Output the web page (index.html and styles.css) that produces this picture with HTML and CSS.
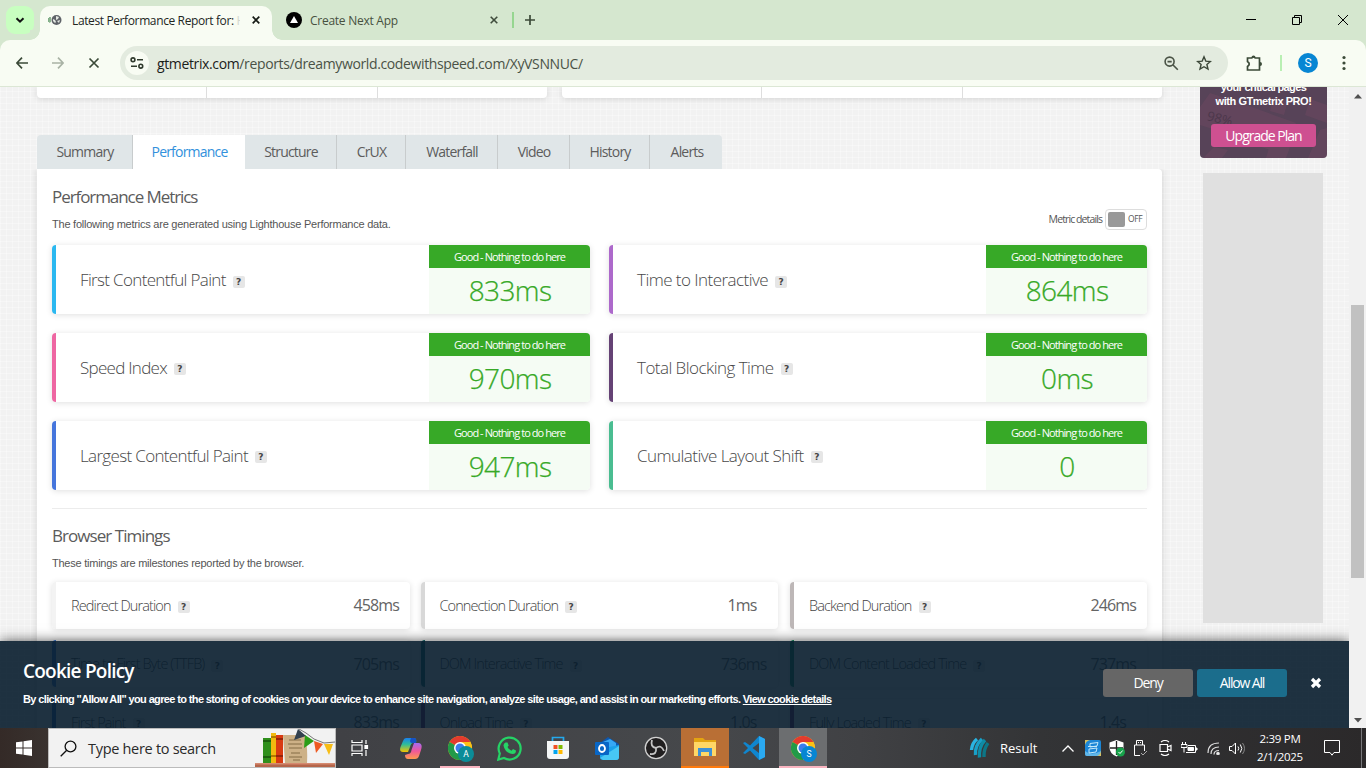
FILE: index.html
```html
<!DOCTYPE html>
<html lang="en">
<head>
<meta charset="utf-8">
<title>Latest Performance Report</title>
<link rel="stylesheet" href="styles.css">
</head>
<body>
<div class="screen">
  <header class="tabstrip">
    <div class="tab-search"><svg width="10" height="7" viewBox="0 0 10 7"><path d="M1.500 1.200 5 4.700 8.500 1.200" fill="none" stroke="#111" stroke-width="2"/></svg></div>
    <div class="btab active">
      <svg class="fav" width="14" height="12" viewBox="0 0 14 12"><path d="M0 4h1v4H0z" fill="#7fae86"/><path d="M1.500 3h1v5l-1 1z" fill="#1c6b2a"/><circle cx="8.500" cy="6" r="5" fill="#5f6368"/><path d="M5 5l2 1 1 2-1 1-2-2zM8 2l3 1-1 2-2 1zM9 7l3-1-1 3z" fill="#e4e8e2"/></svg>
      <span class="btab-title t1">Latest Performance Report for: <i>H</i></span>
      <svg class="x x1" width="8" height="8" viewBox="0 0 8 8"><path d="M.7.7l6.600 6.600M7.300.7L.7 7.300" stroke="#151a14" stroke-width="1.700"/></svg>
    </div>
    <div class="btab second">
      <svg width="16" height="16" viewBox="0 0 16 16"><circle cx="8" cy="8" r="8"/><path d="M8 4l4 7H4z" fill="#fff"/></svg>
      <span class="btab-title t2">Create Next App</span>
      <svg class="x" width="8" height="8" viewBox="0 0 8 8"><path d="M.7.7l6.600 6.600M7.300.7L.7 7.300" stroke="#3f4c3c" stroke-width="1.600"/></svg>
    </div>
    <span class="strip-sep"></span>
    <svg class="plus" width="10" height="10" viewBox="0 0 10 10"><path d="M5 0v10M0 5h10" stroke="#3c4a39" stroke-width="1.700"/></svg>
    <div class="win">
      <svg width="10" height="10" viewBox="0 0 10 10"><path d="M0 4.500h10" stroke="#000"/></svg>
      <svg width="10" height="10" viewBox="0 0 10 10"><path d="M.5 2.500h7v7h-7zM2.500 2.500v-2h7v7h-2" fill="none" stroke="#000"/></svg>
      <svg width="10" height="10" viewBox="0 0 10 10"><path d="M0 0l10 10M10 0L0 10" stroke="#000"/></svg>
    </div>
  </header>
  <div class="toolbar">
    <div class="nav">
      <svg width="12" height="12" viewBox="0 0 12 12"><path d="M12 6H1M6 .7L.9 6 6 11.300" fill="none" stroke="#3b4a38" stroke-width="1.700"/></svg>
      <svg width="12" height="12" viewBox="0 0 12 12"><path d="M0 6h11M6 .7L11.100 6 6 11.300" fill="none" stroke="#a9b3a5" stroke-width="1.700"/></svg>
      <svg width="12" height="12" viewBox="0 0 12 12"><path d="M1.500 1.500l9 9M10.500 1.500l-9 9" stroke="#3b4a38" stroke-width="1.700"/></svg>
    </div>
    <div class="omnibox">
      <span class="site"><svg width="14" height="12" viewBox="0 0 14 12" fill="none" stroke="#2f3a2c" stroke-width="1.600"><circle cx="3" cy="2.800" r="1.900"/><path d="M7 2.800h6M1 9.200h6"/><circle cx="10.800" cy="9.200" r="1.900"/></svg></span>
      <span class="url"><b>gtmetrix.com</b>/reports/dreamyworld.codewithspeed.com/XyVSNNUC/</span>
      <svg class="mag" width="15" height="15" viewBox="0 0 15 15" fill="none" stroke="#4a5346" stroke-width="1.600"><circle cx="5.600" cy="5.600" r="4.500"/><path d="M8.800 8.800l5 5M3.500 5.600h4.200"/></svg>
      <svg width="16" height="16" viewBox="0 0 16 16"><path d="M8 1.800l1.800 4.300 4.600.4-3.500 3 1.100 4.600L8 11.700l-4 2.400 1.100-4.600-3.500-3 4.600-.4z" fill="none" stroke="#3b4738" stroke-width="1.400"/></svg>
    </div>
    <svg class="puzzle" width="17" height="17" viewBox="0 0 17 17"><path d="M1.500 3H5.800Q7.500 1 9.200 3H13.500V15H1.500V11.500Q5 9 1.500 6.500z" fill="none" stroke="#3b4a38" stroke-width="1.700"/><path d="M5.500 2.500a2 2 0 0 1 4 0zM14 7a2 2 0 0 1 0 4z" fill="#3b4a38"/></svg>
    <span class="tool-sep"></span>
    <span class="avatar">S</span>
    <svg class="dots" width="4" height="16" viewBox="0 0 4 16" fill="#3b4a38"><circle cx="2" cy="2.500" r="1.600"/><circle cx="2" cy="8" r="1.600"/><circle cx="2" cy="13.500" r="1.600"/></svg>
  </div>

  <div class="viewport">
    <div class="page">
      <main class="main">
        <div class="topcards"><div class="tc a"><i></i><i></i><i></i></div><div class="tc b"><i></i><i></i><i></i></div></div>
        <nav class="tabs">
          <a class="w96">Summary</a><a class="w112 on">Performance</a><a class="w92">Structure</a><a class="w69">CrUX</a><a class="w92">Waterfall</a><a class="w72">Video</a><a class="w80">History</a><a class="w72">Alerts</a>
        </nav>
        <section class="panel">
          <h2 class="h-perf">Performance Metrics</h2>
          <div class="desc-row">
            <p class="desc">The following metrics are generated using Lighthouse Performance data.</p>
            <div class="details"><span>Metric details</span><span class="toggle"><i></i><em>OFF</em></span></div>
          </div>
          <div class="metrics">
            <div class="metric c1"><span class="name">First Contentful Paint</span><span class="q">?</span><div class="score"><b>Good - Nothing to do here</b><strong>833ms</strong></div></div>
            <div class="metric c2"><span class="name n2">Time to Interactive</span><span class="q">?</span><div class="score"><b>Good - Nothing to do here</b><strong>864ms</strong></div></div>
            <div class="metric c3"><span class="name n3">Speed Index</span><span class="q">?</span><div class="score"><b>Good - Nothing to do here</b><strong>970ms</strong></div></div>
            <div class="metric c4"><span class="name n4">Total Blocking Time</span><span class="q">?</span><div class="score"><b>Good - Nothing to do here</b><strong>0ms</strong></div></div>
            <div class="metric c5"><span class="name n5">Largest Contentful Paint</span><span class="q">?</span><div class="score"><b>Good - Nothing to do here</b><strong>947ms</strong></div></div>
            <div class="metric c6"><span class="name n6">Cumulative Layout Shift</span><span class="q">?</span><div class="score"><b>Good - Nothing to do here</b><strong>0</strong></div></div>
          </div>
          <h2 class="h-brow">Browser Timings</h2>
          <p class="desc desc2">These timings are milestones reported by the browser.</p>
          <div class="timings">
            <div class="timing k1"><span>Redirect Duration</span><span class="q">?</span><b>458ms</b></div>
            <div class="timing k2"><span>Connection Duration</span><span class="q">?</span><b class="in">1ms</b></div>
            <div class="timing k3"><span>Backend Duration</span><span class="q">?</span><b>246ms</b></div>
            <div class="timing k4"><span>Time to First Byte (TTFB)</span><span class="q">?</span><b>705ms</b></div>
            <div class="timing k5"><span>DOM Interactive Time</span><span class="q">?</span><b>736ms</b></div>
            <div class="timing k6"><span>DOM Content Loaded Time</span><span class="q">?</span><b>737ms</b></div>
            <div class="timing k7"><span>First Paint</span><span class="q">?</span><b>833ms</b></div>
            <div class="timing k8"><span>Onload Time</span><span class="q">?</span><b class="in">1.0s</b></div>
            <div class="timing k9"><span>Fully Loaded Time</span><span class="q">?</span><b class="in">1.4s</b></div>
          </div>
        </section>
      </main>
      <aside class="aside">
        <div class="promo">
          <svg class="promo-art" width="127" height="71" viewBox="0 0 127 71"><g fill="#9c5273" opacity=".17"><path d="M0 20L10 6l36 12-14 30L0 38zM46 18l50 18-10 32-56-18zM74 10l14 4-4 14-14-4zM110 12l17 6v18l-22-8zM14 60l14 3-6 8H3zM70 58l14-24 14 5-12 32H66zM108 71l12-28 7-2v30z"/></g><text x="7" y="33" transform="rotate(14 7 30)" class="pct">98%</text></svg>
          <p class="p1">your critical pages</p><p class="p2">with GTmetrix PRO!</p>
          <span class="upgrade">Upgrade Plan</span>
        </div>
        <div class="adslot"></div>
      </aside>
      <div class="cookie">
        <div class="cookie-text"><h3>Cookie Policy</h3><p>By clicking "Allow All" you agree to the storing of cookies on your device to enhance site navigation, analyze site usage, and assist in our marketing efforts. <u>View cookie details</u></p></div>
        <span class="btn deny">Deny</span><span class="btn allow">Allow All</span>
        <svg class="cx" width="12" height="12" viewBox="0 0 12 12"><path d="M2 2l8 8M10 2l-8 8" stroke="#fff" stroke-width="3.200"/></svg>
      </div>
    </div>
    <div class="scroll">
      <svg width="8" height="5" viewBox="0 0 8 5"><path d="M0 4.500L4 0l4 4.500z" fill="#505050"/></svg>
      <span class="thumb"></span>
      <svg width="8" height="5" viewBox="0 0 8 5"><path d="M0 0l4 4.500L8 0z" fill="#505050"/></svg>
    </div>
  </div>

  <footer class="taskbar">
    <div class="start"><svg width="16" height="16" viewBox="0 0 16 16" fill="#fff"><path d="M0 2.300L6.500 1.400V7.500H0zM7.500 1.200L16 0v7.500H7.500zM0 8.500h6.500v6.100L0 13.700zM7.500 8.500H16V16l-8.500-1.200z"/></svg></div>
    <div class="search">
      <svg class="lens" width="17" height="17" viewBox="0 0 17 17" fill="none" stroke="#111" stroke-width="1.300"><circle cx="10.500" cy="6.500" r="5.400"/><path d="M6.700 10.300L.7 16.300"/></svg>
      <span class="ph">Type here to search</span>
      <svg class="books" width="80" height="38" viewBox="0 0 80 38">
        <path d="M0 34h80v4H0z" fill="#b5654a"/><path d="M0 34h80v1.500H0z" fill="#d58a70"/>
        <path d="M8 9h8v25H8z" fill="#2f8f1c"/><path d="M8 11h8v2H8zm0 16h8v2H8z" fill="#1c5f10"/>
        <path d="M16 4h5v30h-5z" fill="#f2b90f"/><path d="M16 7h5v2h-5zm0 19h5v2h-5z" fill="#b17a00"/>
        <path d="M21 6h7v28h-7z" fill="#d83a12"/><path d="M21 9h7v2h-7zm0 17h7v2h-7z" fill="#97240a"/>
        <path d="M28 6h22q3 14 2 28H30z" fill="#cdb187"/><path d="M34 11h12M33 15h14M34 19h13M36 24h9M34 28h13M38 31h7" stroke="#7d6440" stroke-width=".9"/>
        <path d="M44 0l7 4 8 6 10 4 11-1" fill="none" stroke="#777"/>
        <path d="M43 0l8 7-12 4z" fill="#33414f"/><path d="M50 6l9 6-10 7z" fill="#2c9d18"/><path d="M59 12l9 3-7 9z" fill="#ee5a22"/><path d="M69 15l9 0-4 11z" fill="#f7bd16"/>
      </svg>
    </div>
    <div class="apps">
      <div class="app first"><svg width="18" height="16" viewBox="0 0 18 16" fill="none" stroke="#fff" stroke-width="1.200"><path d="M1 0v2.500h10V0M1 16v-2.500h10V16M1 5h10v6H1zM15 0v4M15 10v6"/><path d="M14 5.500h2.500v3H14z" fill="#fff"/></svg></div>
      <div class="app"><svg width="22" height="21" viewBox="0 0 22 21"><defs><linearGradient id="cp1" x2="0" y2="1"><stop offset="0" stop-color="#1a80ee"/><stop offset=".45" stop-color="#2dbd9b"/><stop offset="1" stop-color="#f5c400"/></linearGradient><linearGradient id="cp2" x2="0" y2="1"><stop offset="0" stop-color="#a46af2"/><stop offset=".5" stop-color="#f0579a"/><stop offset="1" stop-color="#ff9a4d"/></linearGradient></defs><path d="M6 0h8q3 0 2 5h-3Q11 5 10 9l-2 5H3Q-1 14 .5 9L3 3Q4 0 6 0z" fill="url(#cp1)"/><path d="M14 5h5q4 1 2 7l-2 6q-1 3-4 3H8q-3 0-3-4l3-1q3 0 3.500-4z" fill="url(#cp2)"/><path d="M11 0h3q3 0 2 5h-4q-2 0-2-2z" fill="#1552c5"/></svg></div>
      <div class="app pink narrow"><svg class="chrome" width="27" height="26" viewBox="0 0 27 26"><use href="#chrome"/><circle cx="18" cy="18" r="8" fill="#0b8c98"/><text x="18" y="21" class="badge">A</text></svg></div>
      <div class="app"><svg width="25" height="25" viewBox="0 0 25 25"><path d="M2.800 17.500A11 11 0 1 1 7 22L1.300 23.600z" fill="none" stroke="#25d366" stroke-width="2.200"/><path d="M8.500 6.500l2 0 1.200 3-1.200 1.500q1.500 2.700 4 3.700l1.500-1.700 3 1.500q0 3.500-3.500 3.500-7.500-1-9-8.500 0-2 2-3z" fill="#25d366"/></svg></div>
      <div class="app"><svg width="24" height="24" viewBox="0 0 24 24"><path d="M6.500 6V1.500h11V6" fill="none" stroke="#24a9ec" stroke-width="1.700"/><path d="M1 5h22v15q0 3-3 3H4q-3 0-3-3z" fill="#f4f6f6"/><path d="M7.500 9h4v4h-4z" fill="#f25022"/><path d="M12.500 9h4v4h-4z" fill="#7fba00"/><path d="M7.500 14h4v4h-4z" fill="#00a4ef"/><path d="M12.500 14h4v4h-4z" fill="#ffb900"/></svg></div>
      <div class="app"><svg width="25" height="23" viewBox="0 0 25 23"><path d="M5 6l8-6 11 7v7H6z" fill="#0e57ad"/><path d="M8 5l7-3 6 4v7H8z" fill="#36a8f5"/><path d="M5 12l19-4v12q0 3-3 3H8q-3 0-3-3z" fill="#1aa1ea"/><path d="M5 21L24 9v11q0 3-3 3H8z" fill="#47c8f5"/><rect y="5" width="14" height="13" rx="1" fill="#0866c6"/><ellipse cx="7" cy="11.500" rx="3" ry="3.500" fill="none" stroke="#fff" stroke-width="1.800"/></svg></div>
      <div class="app"><svg width="24" height="24" viewBox="0 0 24 24"><circle cx="12" cy="12" r="10.700" fill="#211f20" stroke="#d2d2d2" stroke-width="1.300"/><path d="M12 12Q6 11 8 4M12 12q5-4 8 3M12 12q1 7-6 6" fill="none" stroke="#c4c4c4" stroke-width="1.800"/></svg></div>
      <div class="app orange"><svg width="23" height="19" viewBox="0 0 23 19"><path d="M0 0h9l2 2h11v16H0z" fill="#e4a411"/><path d="M0 4h22v14H0z" fill="#ffd765"/><path d="M4 10h14v8h-3v-4H7v4H4z" fill="#3f91d4"/></svg></div>
      <div class="app"><svg width="24" height="24" viewBox="0 0 24 24"><path d="M17 0l6 3v18l-6 3L8 14.500 3 18l-2-1 5-5-5-5 2-1 5 3.500zM17 7l-6.500 5L17 17z" fill="#0f86cf" fill-rule="evenodd"/><path d="M17 0l6 3v18l-6 3z" fill="#2aa9f1"/></svg></div>
      <div class="app pink cur"><svg class="chrome" width="27" height="26" viewBox="0 0 27 26"><g id="chrome"><circle cx="12" cy="12" r="12" fill="#fbc116"/><path d="M12 12L1.600 6A12 12 0 0 1 22.400 6z" fill="#e33b2e"/><path d="M12 12L1.600 6A12 12 0 0 0 12 24l5-9z" fill="#229a48"/><path d="M12 6H22.400A12 12 0 0 1 12 24l5-9z" fill="#fbc116"/><circle cx="12" cy="12" r="6" fill="#fff"/><circle cx="12" cy="12" r="4.500" fill="#3b7ded"/></g><circle cx="18" cy="18" r="8" fill="#0786d3"/><text x="18" y="21" class="badge">S</text></svg></div>
    </div>
    <div class="tray">
      <svg class="icc" width="22" height="22" viewBox="0 0 22 22"><g fill="none" stroke-width="3.400"><path d="M2.500 13Q3 6 8 2" stroke="#2ab4e2"/><path d="M6.500 18Q5.500 9 13 2" stroke="#19a0c8"/><path d="M10.500 20.500Q9.500 10 16 3" stroke="#0e8ba5"/><path d="M15 20q-.5-8 4-14" stroke="#0c7687"/></g></svg>
      <span class="result">Result</span>
      <svg class="chev" width="12" height="7" viewBox="0 0 12 7"><path d="M.5 6.500L6 1l5.500 5.500" fill="none" stroke="#fff" stroke-width="1.300"/></svg>
      <svg class="ti" width="16" height="16" viewBox="0 0 16 16"><rect width="16" height="16" rx="2" fill="#1c86d6"/><path d="M0 11q6 5 16 0v3q0 2-2 2H2q-2 0-2-2z" fill="#5fb5e8"/><path d="M12 16q4-1 4-7v7zM0 5V0h5q-4 1-5 5z" fill="#d6c063"/><path d="M5 3.500l8-1-1 3.500-7 1zM4 9l8-1-1 4-7 1zM3 6.500l9 0" fill="none" stroke="#c4e9fb"/></svg>
      <svg class="shield" width="16" height="17" viewBox="0 0 16 17"><path d="M7.500 0l7 2.500v5q0 6-7 9-7-3-7-9v-5z" fill="#fff"/><path d="M7.500 1v14M1 8h13" stroke="#222" stroke-width="1.300"/><circle cx="11.500" cy="12" r="4.500" fill="#16a34a"/><path d="M9.500 12l1.500 1.500 2.700-3" fill="none" stroke="#fff"/></svg>
      <svg class="usb" width="13" height="16" viewBox="0 0 13 16" fill="none" stroke="#fff"><path d="M2.500 5V.5h6V5M.5 15.500V5h10v6M.5 15.500H6M4.500 2v1M6.500 2v1"/><path d="M7 13l2 2 4-4" stroke="#aaa"/></svg>
      <svg class="cam" width="13" height="16" viewBox="0 0 13 16" fill="none" stroke="#fff" stroke-width="1.200"><path d="M1 4.500h7.500v7H1zM8.500 7L12 5.500v5L8.500 9M2 2q4-3 8 0M2 14q4 3 8 0"/></svg>
      <svg class="bat" width="17" height="12" viewBox="0 0 17 12" fill="none" stroke="#fff"><path d="M1.500 0v3M4.500 0v3M0 2.500h6v3H0zM3 6v4.500M5 10.500h9.500v-7H7"/><path d="M7 5.500h5.500v3H7zM15 6h1v2h-1z" fill="#fff"/></svg>
      <svg class="wifi" width="13" height="13" viewBox="0 0 13 13" fill="none" stroke="#ddd" stroke-width="1.200"><path d="M1 11Q1 1 12 1M4 12q0-7 8-7M7 12.500Q7 8.500 12 8.500"/><circle cx="11" cy="11.500" r="1.200" fill="#fff"/></svg>
      <svg class="vol" width="17" height="13" viewBox="0 0 17 13" fill="none" stroke="#fff"><path d="M.5 4.500H3L6.500 1v11L3 8.500H.5zM9 4.500q1.500 2 0 4M11.300 2.500q3 4 0 8"/><path d="M13.500 1q4 5.500 0 11" stroke="#888"/></svg>
      <div class="clock"><span>2:39 PM</span><span>2/1/2025</span></div>
      <svg class="note" width="16" height="16" viewBox="0 0 16 16"><path d="M.5.500h15v12H10l-2 2.700-2-2.700H.5z" fill="none" stroke="#fff"/></svg>
      <i class="edge"></i>
    </div>
  </footer>
</div>
</body>
</html>
```
FILE: styles.css
```css
* { box-sizing: border-box; }
body { margin: 0; width: 1366px; height: 768px; overflow: hidden; font-family: "Liberation Sans", sans-serif; }
svg { display: block; flex: none; }
h2, h3, p { margin: 0; }
.screen { width: 1366px; height: 768px; display: flex; flex-direction: column; background: #d5e7cf; }

/* browser chrome */
.tabstrip { height: 40px; display: flex; align-items: center; font: 12px "Open Sans", sans-serif; background: #d5e7cf; }
.tab-search { width: 28px; height: 28px; margin-left: 6px; border-radius: 9px; background: #c8ffc0; display: grid; place-items: center; }
.btab { display: flex; align-items: center; }
.btab.active { width: 232px; height: 34px; margin: 6px 0 0 6px; border-radius: 10px 10px 0 0; background: #f8fcf3; padding: 0 12px 6px 8px; position: relative; }
.btab.active::before, .btab.active::after { content: ""; position: absolute; bottom: 0; width: 10px; height: 10px; }
.btab.active::before { left: -10px; background: radial-gradient(circle at 0 0, #d5e7cf 9.500px, #f8fcf3 10px); }
.btab.active::after { right: -10px; background: radial-gradient(circle at 100% 0, #d5e7cf 9.500px, #f8fcf3 10px); }
.btab-title { white-space: nowrap; overflow: hidden; }
.t1 { width: 168px; margin-left: 10px; color: #22261f; letter-spacing: -.38px; }
.t1 i { font-style: normal; color: #d3d8cf; }
.t2 { width: 175px; margin-left: 8px; color: #47513f; letter-spacing: -.26px; }
.x1 { margin-left: 12px; }
.second { margin-left: 14px; }
.second .x { margin-left: 5px; }
.strip-sep { width: 2px; height: 16px; margin-left: 14px; background: #96d690; }
.plus { margin-left: 11px; }
.win { margin-left: auto; display: flex; gap: 36px; margin-right: 18px; }
.toolbar { height: 47px; background: #f8fcf3; border-radius: 10px 10px 0 0; border-bottom: 1px solid #dce7d5; display: flex; align-items: center; }
.nav { display: flex; gap: 24px; margin-left: 16px; }
.omnibox { width: 1108px; height: 34px; margin-left: 20px; border-radius: 17px; background: #e3ebdf; display: flex; align-items: center; padding: 0 16px 0 5px; }
.site { width: 24px; height: 24px; border-radius: 50%; background: #f8fcf3; display: grid; place-items: center; }
.url { flex: 1; margin-left: 8px; font: 14px "Open Sans", sans-serif; color: #4a5246; letter-spacing: -.37px; }
.url b { font-weight: 400; color: #1b211a; }
.mag { margin-right: 17px; }
.puzzle { margin-left: 18px; }
.tool-sep { width: 2px; height: 16px; margin-left: 17px; background: #b9efb3; }
.avatar { width: 20px; height: 20px; margin-left: 16px; border-radius: 50%; background: #0786d3; color: #fff; font: 12px/20px Roboto, sans-serif; text-align: center; }
.dots { margin-left: 24px; }

/* page */
.viewport { height: 641px; display: flex; overflow: hidden; }
.page { width: 1349px; height: 641px; position: relative; display: flex; overflow: hidden; background-color: #f2f2f2; background-image: repeating-linear-gradient(0deg, rgba(255,255,255,.3) 0 1px, transparent 1px 6px), repeating-linear-gradient(90deg, rgba(255,255,255,.3) 0 1px, transparent 1px 6px); }
.main { width: 1125px; margin-left: 37px; }
.topcards { display: flex; gap: 15px; height: 11px; }
.tc { display: flex; background: #fff; border-radius: 0 0 4px 4px; box-shadow: 0 1px 6px rgba(0,0,0,.13); }
.tc.a { width: 510px; } .tc.b { width: 600px; }
.tc i { flex: 1; border-right: 1px solid #dedede; }
.tc i:last-child { border: 0; }
.tabs { display: flex; margin-top: 37px; height: 34px; font: 14px/34px "Open Sans", sans-serif; letter-spacing: -.8px; color: #5c5c5c; text-align: center; }
.tabs a { background: #e0e6e8; border-right: 1px solid #c8cccd; padding-left: 1px; }
.tabs a:first-child { border-radius: 4px 0 0 0; }
.tabs a:last-child { border-radius: 0 4px 0 0; border-right: 0; padding-left: 2px; }
.tabs .on { background: #fff; color: #3291dc; border: 0; }
.w96 { width: 96px; } .w112 { width: 112px; } .w92 { width: 92px; } .w69 { width: 69px; } .w72 { width: 72px; } .w80 { width: 80px; }
.panel { height: 620px; background: #fff; border-radius: 0 4px 0 0; padding: 16px 15px 0; box-shadow: 0 0 7px rgba(0,0,0,.14); clip-path: inset(0 -10px -10px -10px); }
h2 { font: 400 17px/24px "Open Sans", sans-serif; color: #5b5b5b; }
.h-perf { letter-spacing: -1.070px; }
.desc-row { display: flex; height: 35px; margin-top: 1px; justify-content: space-between; }
.desc { font-size: 11px; line-height: 14px; color: #555; white-space: nowrap; letter-spacing: -.23px; margin-top: 7px; }
.details { display: flex; font: 10.500px/20px "Open Sans", sans-serif; letter-spacing: -.9px; color: #555; gap: 3px; margin-top: -1px; }
.toggle { width: 42px; height: 21px; border: 1px solid #ddd; border-radius: 4px; display: flex; padding: 2px; gap: 3px; }
.toggle i { width: 17px; height: 15px; border-radius: 2px; background: #999; }
.toggle em { font: 8.500px/13px "Open Sans", sans-serif; letter-spacing: -.4px; }
.metrics { display: grid; grid-template-columns: 538px 538px; gap: 18.500px 19px; padding-bottom: 18px; border-bottom: 1px solid #ececec; }
.metric { height: 69.330px; display: flex; align-items: center; border-left: 4px solid; border-radius: 4px; box-shadow: 0 1px 6px rgba(0,0,0,.13); overflow: hidden; padding-left: 24px; color: #686868; }
.name { font: 300 17px "Open Sans", sans-serif; color: #484848; letter-spacing: -.66px; white-space: nowrap; }
.n2, .n4, .n6 { letter-spacing: -.54px; }
.n3 { letter-spacing: -.72px; }
.q { width: 12px; height: 12px; margin: 4px 0 0 7px; border-radius: 2px; background: #e6e6e6; color: #444; font: bold 9px/12px "DejaVu Sans", sans-serif; text-align: center; }
.score { width: 161px; height: 100%; margin-left: auto; text-align: center; background: #f5fcf4; color: #37a927; }
.score b { display: block; height: 23px; background: #37a927; color: #fff; font: 400 11px/23px "Open Sans", sans-serif; letter-spacing: -.93px; }
.score strong { display: block; font: 300 28px/44px "Open Sans", sans-serif; letter-spacing: -.6px; padding-left: 1px; -webkit-text-stroke: .25px; }
.c1 { border-color: #2bb8f0; } .c2 { border-color: #ad69cb; } .c3 { border-color: #ee66a2; } .c4 { border-color: #654275; } .c5 { border-color: #4575dc; } .c6 { border-color: #4abd91; }
.h-brow { margin-top: 15px; letter-spacing: -.95px; }
.desc2 { margin-top: 8px; letter-spacing: -.24px; }
.timings { display: grid; grid-template-columns: 358px 357px 357px; gap: 11.500px; column-gap: 11px 12px; justify-content: space-between; column-gap: 0; margin-top: 12px; }
.timing { height: 47px; display: flex; align-items: center; border-left: 4px solid; border-radius: 4px; box-shadow: 0 1px 6px rgba(0,0,0,.13); padding: 0 11px 0 15px; font: 300 14.500px "Open Sans", sans-serif; letter-spacing: -.9px; color: #444; white-space: nowrap; }
.k2, .k5, .k8 { margin-left: -1px; margin-right: 1px; padding-left: 15px; }
.timing .q { letter-spacing: 0; }
.timing b { margin-left: auto; font: 400 16px "Open Sans", sans-serif; letter-spacing: -.9px; color: #646464; }
.timing b.in { margin-right: 10px; }
.k1 { border-color: #f3f3f3; } .k2 { border-color: #d8d8d8; } .k3 { border-color: #bdb7b7; } .k4 { border-color: #397bdc; } .k5 { border-color: #156e6e; } .k6 { border-color: #109460; } .k7 { border-color: #246ac0; } .k8, .k9 { border-color: #7d2572; }
.aside { width: 127px; margin-left: 38px; }
.promo { height: 71px; position: relative; overflow: hidden; background: #574358; border-radius: 0 0 4px 4px; display: flex; flex-direction: column; align-items: center; color: #fff; font-size: 11px; font-weight: 700; line-height: 14px; }
.promo-art { position: absolute; left: 0; top: 0; }
.pct { font: 13px "Open Sans", sans-serif; fill: #372b3b; opacity: .5; }
.promo p { position: relative; white-space: nowrap; }
.p1 { margin-top: -7px; letter-spacing: -.62px; } .p2 { letter-spacing: -.45px; }
.upgrade { position: relative; width: 105px; height: 23px; margin-top: 16px; border-radius: 3px; background: #ce5091; font: 400 14px/23px "Open Sans", sans-serif; letter-spacing: -1px; text-align: center; }
.adslot { width: 120px; height: 450px; margin: 15px 0 0 3px; background: #e0e0e0; }
.cookie { position: absolute; left: 0; right: 0; bottom: 0; height: 87px; display: flex; align-items: center; color: #fff; background: rgba(9,30,46,.91); box-shadow: 0 0 12px rgba(0,0,0,.65); }
.cookie-text { width: 1080px; margin-left: 23px; align-self: flex-start; }
.cookie h3 { font: 600 19px/26px "Open Sans", sans-serif; margin-top: 17px; letter-spacing: -.77px; }
.cookie p { font: bold 11px/14px "Liberation Sans", sans-serif; margin-top: 8px; letter-spacing: -.63px; white-space: nowrap; }
.btn { width: 90px; height: 28px; margin-right: 4px; border-radius: 3px; font: 14px/27px "Open Sans", sans-serif; letter-spacing: -1.150px; text-align: center; margin-top: -3px; }
.deny { background: #666; } .allow { background: #1b6d8c; }
.cx { margin: -4px 0 0 19px; }
.scroll { width: 17px; background: #f1f1f1; display: flex; flex-direction: column; align-items: center; padding: 7px 0 5px; }
.thumb { width: 13px; height: 273px; background: #c1c1c1; margin: 206px 0 auto; }

/* taskbar */
.taskbar { height: 40px; display: flex; color: #fff; background: linear-gradient(90deg, #342a27 0, #39322f 48px, #404145 340px, #46484b 700px, #404144 860px, #333436 1040px, #2b292a 1366px); font-family: "Open Sans", sans-serif; }
.start { width: 48px; display: grid; place-items: center; }
.search { width: 288px; background: #f2f2f2; border: 1px solid #bbb; display: flex; align-items: center; }
.lens { margin-left: 11px; }
.ph { width: 179px; margin-left: 11px; color: #2a2a2a; font-size: 14.500px; letter-spacing: -.3px; white-space: nowrap; }
.books { margin-left: -11px; }
.apps { display: flex; }
.app { width: 48px; height: 40px; margin-right: 1px; display: grid; place-items: center; }
.app.first { margin-right: 3px; }
.app.pink { border-bottom: 2px solid #f9b4c0; }
.app.narrow { width: 40px; margin: 0 5px 0 4px; }
.app.pink .chrome { margin: 3px 0 0 3px; }
.cur { background: #6c6e70; }
.orange { background: #b96f35; border-bottom: 2px solid #ff7a0c; }
.badge { font: 8.500px Roboto, sans-serif; fill: #fff; text-anchor: middle; }
.tray { flex: 1; display: flex; align-items: center; }
.icc { margin-left: 141px; }
.result { width: 42px; margin-left: 9px; font-size: 13px; }
.chev { margin-left: 20px; }
.ti { margin-left: 11px; } .shield { margin-left: 8px; } .usb { margin-left: 9px; } .cam { margin-left: 12px; } .bat { margin-left: 9px; } .wifi { margin-left: 9px; } .vol { margin-left: 9px; }
.clock { width: 64px; margin-left: 2px; display: flex; flex-direction: column; text-align: center; font-size: 11.500px; line-height: 18px; letter-spacing: -.25px; white-space: nowrap; }
.note { margin-left: 12px; }
.edge { margin-left: auto; width: 1px; height: 40px; background: #77777a; margin-right: 4px; }
```
